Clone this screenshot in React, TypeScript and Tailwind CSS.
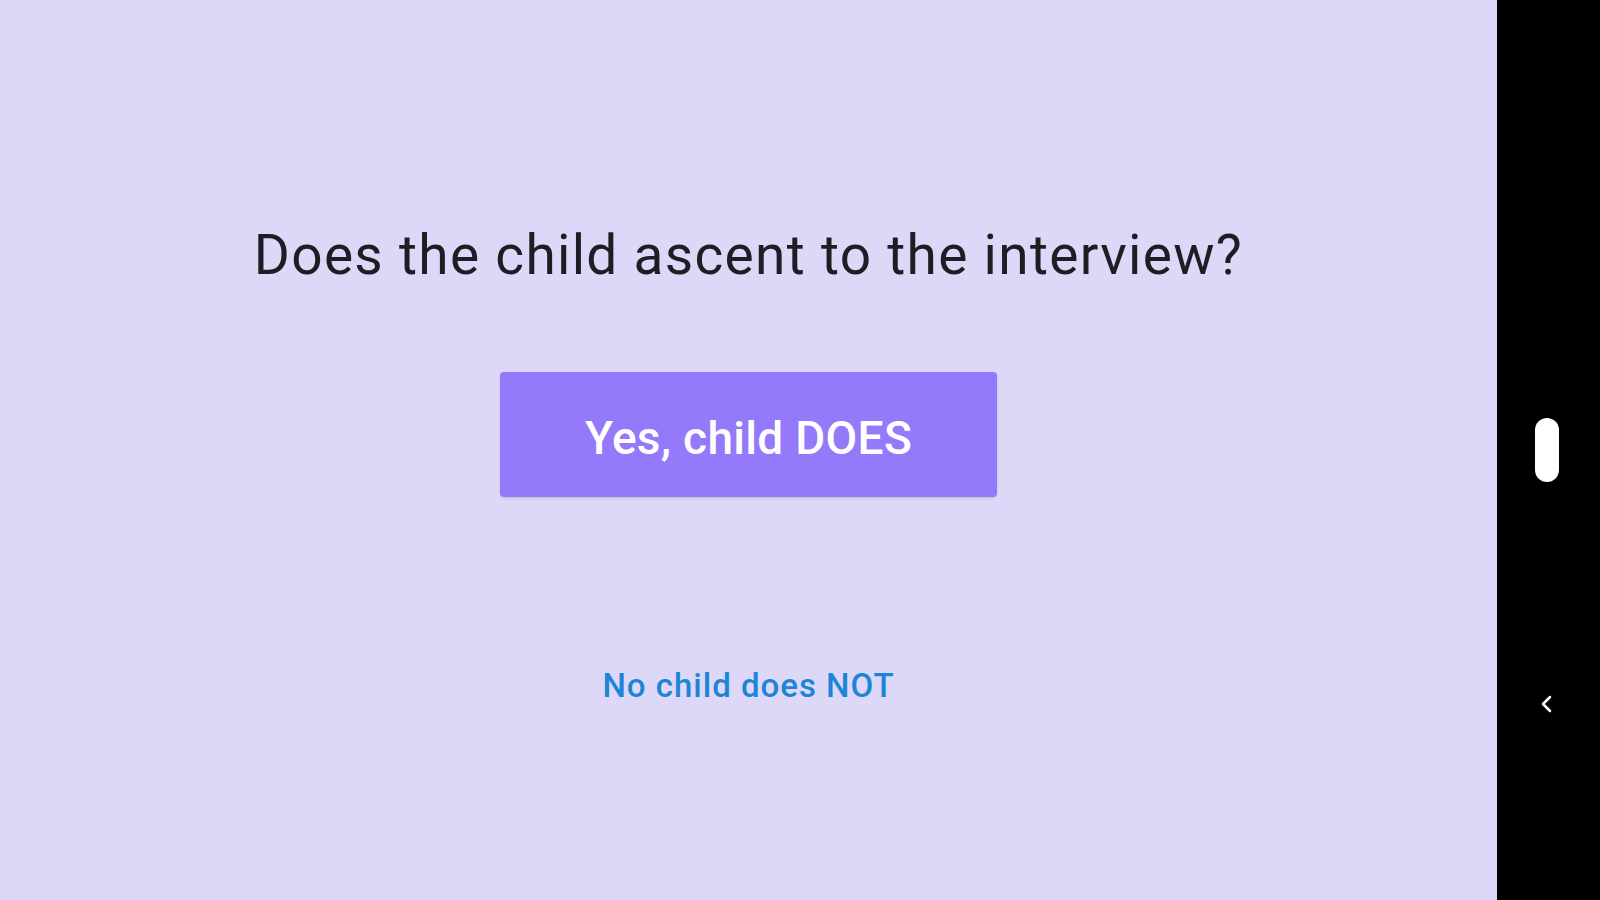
import React from "react";

const App = () => {
  return (
    <div className="flex h-[900px] w-[1600px] bg-black" style={{ fontFamily: "Roboto, 'Noto Sans', sans-serif" }}>
      <main className="flex w-[1497px] flex-col items-center bg-[#ddd8f7]">
        <h1 className="mt-[228px] text-[55px] leading-[55px] font-normal tracking-[1.3px] text-[#1f1d24]">
          Does the child ascent to the interview?
        </h1>
        <button className="mt-[89px] h-[125px] w-[497px] rounded-[4px] bg-[#9479fa] pt-[8px] text-[46px] font-medium tracking-[0.3px] text-white shadow-sm">
          Yes, child DOES
        </button>
        <button className="mt-[172px] text-[33px] leading-[33px] font-medium tracking-[1px] text-[#1d84d8]">
          No child does NOT
        </button>
      </main>
      <aside className="relative flex-1">
        <div className="absolute top-[418px] left-[38px] h-[64px] w-[24px] rounded-full bg-white" />
        <svg
          className="absolute top-[694px] left-[40px]"
          width="20"
          height="20"
          viewBox="0 0 20 20"
          fill="none"
          stroke="white"
          strokeWidth="2.5"
          strokeLinecap="round"
          strokeLinejoin="round"
        >
          <path d="M13 3 L6 10 L13 17" />
        </svg>
      </aside>
    </div>
  );
};

export default App;
